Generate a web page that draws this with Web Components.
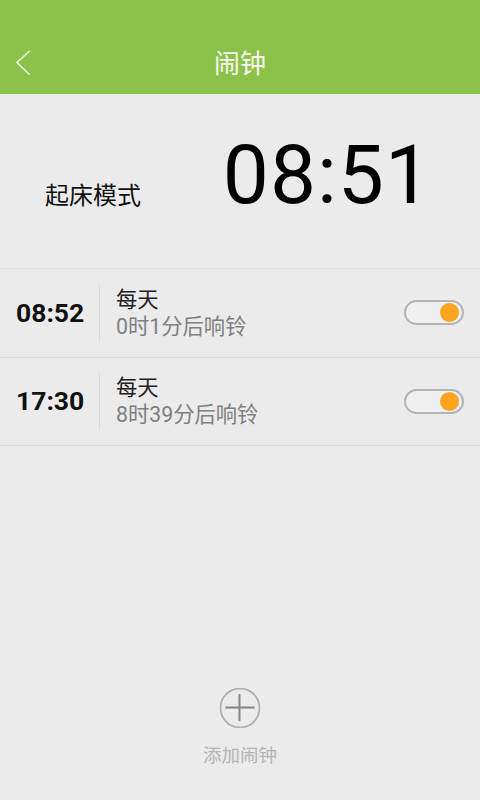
<!DOCTYPE html>
<html lang="zh">
<head>
<meta charset="utf-8">
<title>闹钟</title>
<style>
  html, body { margin: 0; height: 100%; }
  body {
    background: #ebebeb;
    font-family: Roboto, "Noto Sans CJK SC", sans-serif;
  }
</style>
</head>
<body>
<alarm-app>
  <app-bar title="闹钟"></app-bar>
  <clock-hero label="起床模式" time="08:51"></clock-hero>
  <alarm-row time="08:52" repeat="每天" remain="0时1分后响铃"></alarm-row>
  <alarm-row time="17:30" repeat="每天" remain="8时39分后响铃"></alarm-row>
  <add-button slot="footer" label="添加闹钟"></add-button>
</alarm-app>

<script>
// page shell, the add button sits at the bottom
class AlarmApp extends HTMLElement {
    constructor() {
        super();
        this.attachShadow({ mode: 'open' });
        this.shadowRoot.innerHTML = `
            <style>
                :host {
                    display: flex;
                    flex-direction: column;
                    height: 800px;
                    background: #ebebeb;
                }
                .list { flex: 1; }
            </style>
            <div class="list"><slot></slot></div>
            <slot name="footer"></slot>
        `;
    }
}

class AppBar extends HTMLElement {
    connectedCallback() {
        this.attachShadow({ mode: 'open' });
        this.shadowRoot.innerHTML = `
            <style>
                :host {
                    display: flex;
                    align-items: flex-end;
                    justify-content: center;
                    position: relative;
                    box-sizing: border-box;
                    height: 94px;
                    padding-bottom: 14px;
                    background: #8bc34a;
                    color: #f7fbf0;
                    font: 26px/36px "Noto Sans CJK SC", sans-serif;
                }
                svg { position: absolute; left: 14px; top: 49px; }
            </style>
            <svg width="18" height="28" viewBox="0 0 18 28" fill="none" stroke="#f0f7e4" stroke-width="1.6">
                <path d="M15.5 2 L3 13.5 L15.5 25.5"/>
            </svg>
            <span>${this.getAttribute('title')}</span>
        `;
    }
}

class ClockHero extends HTMLElement {
    connectedCallback() {
        this.attachShadow({ mode: 'open' });
        this.shadowRoot.innerHTML = `
            <style>
                :host {
                    display: flex;
                    justify-content: space-between;
                    box-sizing: border-box;
                    height: 174px;
                    padding: 0 48px 0 45px;
                    color: #111;
                }
                .label {
                    margin-top: 84px;
                    font: 24px/32px "Noto Sans CJK SC", sans-serif;
                }
                .time {
                    margin-top: 33px;
                    font: 400 82px/96px Roboto, sans-serif;
                    letter-spacing: 1px;
                    color: #000;
                }
            </style>
            <span class="label">${this.getAttribute('label')}</span>
            <span class="time">${this.getAttribute('time')}</span>
        `;
    }
}

class AlarmRow extends HTMLElement {
    connectedCallback() {
        this.attachShadow({ mode: 'open' });
        this.shadowRoot.innerHTML = `
            <style>
                :host {
                    display: flex;
                    align-items: center;
                    box-sizing: border-box;
                    height: 88.5px;
                    border-top: 1px solid #dcdcdc;
                }
                :host(:last-of-type) {
                    height: 89.5px;
                    border-bottom: 1px solid #dcdcdc;
                }
                .time {
                    width: 99px;
                    box-sizing: border-box;
                    padding-left: 16px;
                    font: 700 26.5px/32px Roboto, sans-serif;
                    color: #111;
                }
                .rule {
                    width: 1px;
                    height: 58px;
                    background: #dcdcdc;
                }
                .text {
                    flex: 1;
                    padding-left: 16px;
                    font-family: Roboto, "Noto Sans CJK SC", sans-serif;
                    font-size: 21.3px;
                    line-height: 27px;
                }
                .repeat { color: #222; }
                .remain { color: #808080; }
                app-switch { margin-right: 16px; }
            </style>
            <span class="time">${this.getAttribute('time')}</span>
            <span class="rule"></span>
            <div class="text">
                <div class="repeat">${this.getAttribute('repeat')}</div>
                <div class="remain">${this.getAttribute('remain')}</div>
            </div>
            <app-switch></app-switch>
        `;
    }
}

class AppSwitch extends HTMLElement {
    constructor() {
        super();
        this.attachShadow({ mode: 'open' });
        this.shadowRoot.innerHTML = `
            <style>
                :host {
                    display: flex;
                    align-items: center;
                    justify-content: flex-end;
                    box-sizing: border-box;
                    width: 60px;
                    height: 25px;
                    padding-right: 3px;
                    border: 2px solid #b4b4b4;
                    border-radius: 13px;
                    background: #f0f0f0;
                }
                .knob {
                    width: 19px;
                    height: 19px;
                    border-radius: 50%;
                    background: #fba41f;
                }
            </style>
            <span class="knob"></span>
        `;
    }
}

class AddButton extends HTMLElement {
    connectedCallback() {
        this.attachShadow({ mode: 'open' });
        this.shadowRoot.innerHTML = `
            <style>
                :host {
                    display: flex;
                    flex-direction: column;
                    align-items: center;
                    height: 112px;
                    color: #b4b4b4;
                    font: 18.5px/26px "Noto Sans CJK SC", sans-serif;
                }
                svg { display: block; margin-bottom: 13px; }
            </style>
            <svg width="42" height="40" viewBox="0 0 42 40" fill="none">
                <circle cx="21" cy="20" r="19.5" stroke="#b0b0b0" stroke-width="1.8"/>
                <path d="M6.5 19.5H35.5M20.5 6V33" stroke="#858585" stroke-width="2"/>
            </svg>
            <span>${this.getAttribute('label')}</span>
        `;
    }
}

customElements.define('alarm-app', AlarmApp);
customElements.define('app-bar', AppBar);
customElements.define('clock-hero', ClockHero);
customElements.define('app-switch', AppSwitch);
customElements.define('alarm-row', AlarmRow);
customElements.define('add-button', AddButton);
</script>
</body>
</html>
